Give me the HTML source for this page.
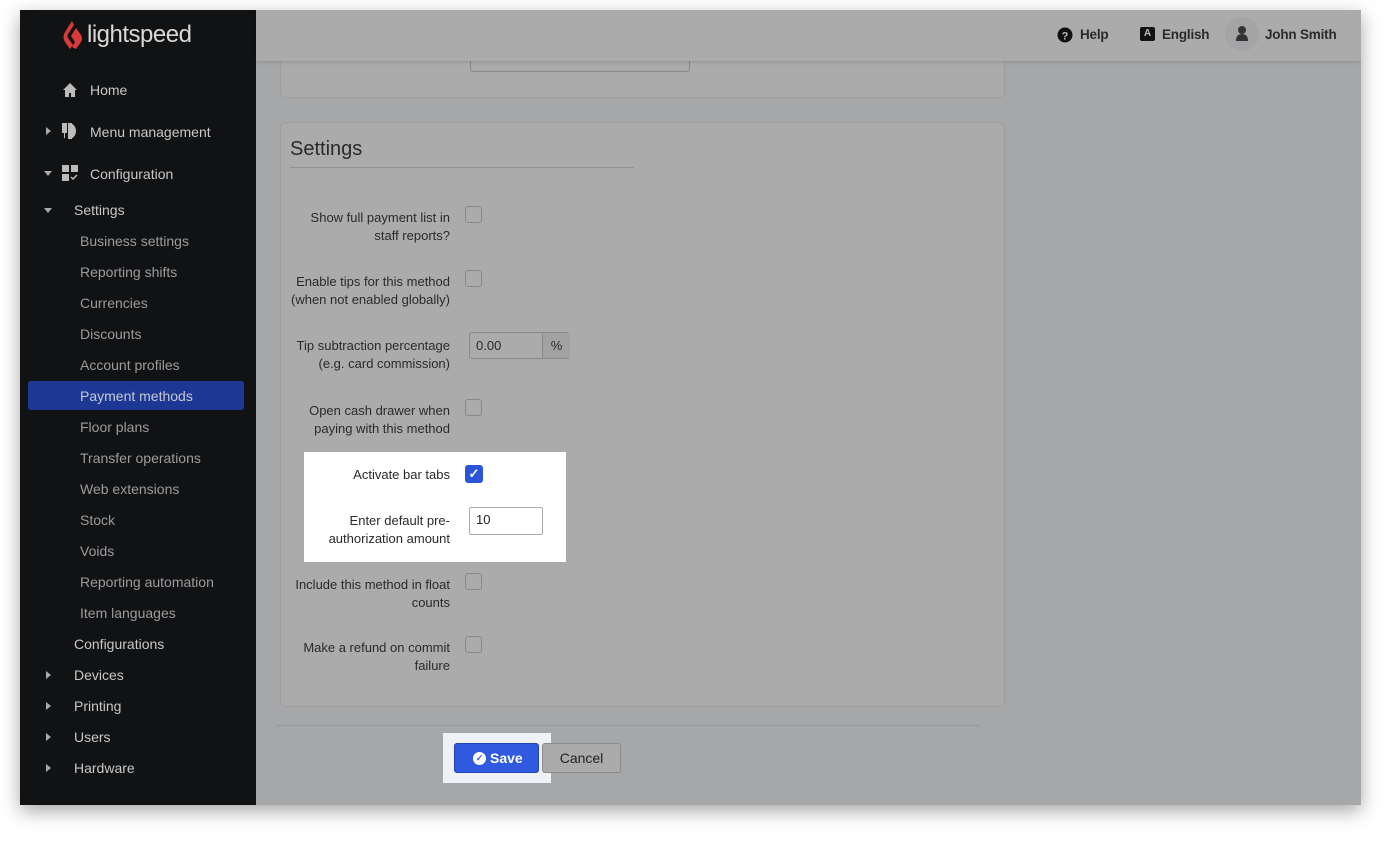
<!DOCTYPE html>
<html><head><style>
*{margin:0;padding:0;box-sizing:border-box}
body{width:1391px;height:846px;background:#fff;font-family:"Liberation Sans",sans-serif;position:relative;overflow:hidden}
#win{position:absolute;left:20px;top:10px;width:1341px;height:795px;background:#a6a7a9;box-shadow:0 6px 18px rgba(0,0,0,.35);overflow:hidden}
#side{position:absolute;left:0;top:0;width:236px;height:795px;background:#111214}
#hdr{position:absolute;left:236px;top:0;right:0;height:51px;background:#ababab;box-shadow:0 1px 4px rgba(0,0,0,.15)}
.s{position:absolute;font-size:14px;color:#c8c8c8;white-space:nowrap}
.sub{position:absolute;left:60px;font-size:14px;color:#9c9c9c}
.tri{position:absolute;width:0;height:0}
.tr{border-top:4px solid transparent;border-bottom:4px solid transparent;border-left:5px solid #aaa}
.td{border-left:4px solid transparent;border-right:4px solid transparent;border-top:5px solid #aaa}
.card{position:absolute;background:#ababab;border:1px solid #9d9d9d;border-radius:6px}
.lbl{position:absolute;right:0;width:180px;text-align:right;font-size:13px;line-height:18px;color:#2a2a2a}
.row{position:absolute;left:260px;width:170px}
.cb{position:absolute;width:17px;height:17px;border:1px solid #888;border-radius:3px;background:#ababab}
.h{position:absolute;font-size:13.5px;color:#2a2a2a;font-weight:bold;letter-spacing:-.2px}
</style></head><body>
<div id="win">
<div id="side">
 <svg style="position:absolute;left:42px;top:10px" width="22" height="30" viewBox="0 0 22 30"><path d="M10 1 L3 12 Q0 17 3 22 L8 29 L11 25 L6 18 Q5 16 6 14 L12 5Z M14 8 L9 16 L13 22 L10 27 L14 29 L19 22 Q21 18 19 15 Z" fill="#d93a3a"/></svg>
 <div class="s" style="left:67px;top:11px;font-size:24px;color:#d8d8d8;letter-spacing:-.5px">lightspeed</div>
 <svg style="position:absolute;left:42px;top:72px" width="16" height="15" viewBox="0 0 16 15"><path d="M8 1 L1 8 H3 V15 H7 V11 H9 V15 H13 V8 H15Z" fill="#bbb"/></svg>
 <div class="s" style="left:70px;top:72px">Home</div>
 <div class="tri tr" style="left:26px;top:117px"></div>
 <svg style="position:absolute;left:42px;top:113px" width="17" height="16"><rect x="0" y="0" width="5" height="10" fill="#bbb"/><rect x="2" y="10" width="1" height="5" fill="#bbb"/><path d="M7 0 A7 8 0 0 1 7 16Z" fill="#bbb"/><rect x="6" y="0" width="4" height="16" fill="#bbb"/></svg>
 <div class="s" style="left:70px;top:114px">Menu management</div>
 <div class="tri td" style="left:24px;top:161px"></div>
 <svg style="position:absolute;left:42px;top:155px" width="16" height="16"><rect x="0" y="0" width="7" height="7" fill="#bbb"/><rect x="9" y="0" width="7" height="7" fill="#bbb"/><rect x="0" y="9" width="7" height="7" fill="#bbb"/><path d="M9 12 L11 14 L15 10" stroke="#bbb" stroke-width="1.5" fill="none"/></svg>
 <div class="s" style="left:70px;top:156px">Configuration</div>
 <div class="tri td" style="left:24px;top:198px"></div>
 <div class="s" style="left:54px;top:192px">Settings</div>
 <div class="sub" style="top:223px">Business settings</div>
 <div class="sub" style="top:254px">Reporting shifts</div>
 <div class="sub" style="top:285px">Currencies</div>
 <div class="sub" style="top:316px">Discounts</div>
 <div class="sub" style="top:347px">Account profiles</div>
 <div style="position:absolute;left:8px;top:371px;width:216px;height:29px;background:#1c3894;border-radius:3px"></div>
 <div class="sub" style="top:378px;color:#c8c8d0">Payment methods</div>
 <div class="sub" style="top:409px">Floor plans</div>
 <div class="sub" style="top:440px">Transfer operations</div>
 <div class="sub" style="top:471px">Web extensions</div>
 <div class="sub" style="top:502px">Stock</div>
 <div class="sub" style="top:533px">Voids</div>
 <div class="sub" style="top:564px">Reporting automation</div>
 <div class="sub" style="top:595px">Item languages</div>
 <div class="s" style="left:54px;top:626px">Configurations</div>
 <div class="tri tr" style="left:26px;top:661px"></div><div class="s" style="left:54px;top:657px">Devices</div>
 <div class="tri tr" style="left:26px;top:692px"></div><div class="s" style="left:54px;top:688px">Printing</div>
 <div class="tri tr" style="left:26px;top:723px"></div><div class="s" style="left:54px;top:719px">Users</div>
 <div class="tri tr" style="left:26px;top:754px"></div><div class="s" style="left:54px;top:750px">Hardware</div>
</div>
<div class="card" style="left:260px;top:-10px;width:725px;height:98px">
 <div style="position:absolute;left:80px;top:48px;width:109px;text-align:right;font-size:13px;color:#2a2a2a">Account ID</div>
 <div style="position:absolute;left:189px;top:48px;width:220px;height:23px;border:1px solid #888;border-radius:3px;background:#ababab"></div>
</div>
<div id="hdr">
 <svg style="position:absolute;left:801px;top:17px" width="16" height="16"><circle cx="8" cy="8" r="7.5" fill="#111"/><text x="8" y="12.5" font-size="11" font-weight="bold" text-anchor="middle" fill="#bbb" font-family="Liberation Sans">?</text></svg>
 <div class="h" style="left:824px;top:17px">Help</div>
 <div style="position:absolute;left:884px;top:17px;width:15px;height:14px;background:#111;border-radius:2px;color:#bbb;font-size:10px;font-weight:bold;text-align:center;line-height:14px">A</div>
 <div class="h" style="left:906px;top:17px">English</div>
 <div style="position:absolute;left:969px;top:7px;width:34px;height:34px;border-radius:50%;background:#a4a4a6"></div>
 <svg style="position:absolute;left:979px;top:15px" width="14" height="17"><circle cx="7" cy="5" r="4" fill="#333"/><path d="M1 16 Q1 9 7 9 Q13 9 13 16Z" fill="#333"/></svg>
 <div class="h" style="left:1009px;top:17px">John Smith</div>
</div>
<div class="card" style="left:260px;top:112px;width:725px;height:585px">
 <div style="position:absolute;left:9px;top:15px;font-size:20px;color:#2a2a2a">Settings</div>
 <div style="position:absolute;left:9px;top:44px;width:344px;border-top:1px solid #939393"></div>
</div>
<div style="position:absolute;left:284px;top:442px;width:262px;height:110px;background:#fff"></div>
<div style="position:absolute;left:423px;top:723px;width:108px;height:50px;background:#eef1f6"></div>
<div id="form" style="position:absolute;left:0;top:0">
 <div class="row" style="top:199px"><div class="lbl">Show full payment list in<br>staff reports?</div></div>
 <div class="cb" style="left:445px;top:196px"></div>
 <div class="row" style="top:263px"><div class="lbl">Enable tips for this method<br>(when not enabled globally)</div></div>
 <div class="cb" style="left:445px;top:260px"></div>
 <div class="row" style="top:327px"><div class="lbl">Tip subtraction percentage<br>(e.g. card commission)</div></div>
 <div style="position:absolute;left:449px;top:322px;width:101px;height:27px;border:1px solid #888;border-radius:3px;background:#ababab"><div style="position:absolute;left:72px;top:0;width:28px;height:25px;border-left:1px solid #888;background:#a2a2a2;font-size:13px;text-align:center;line-height:25px;color:#2a2a2a">%</div><div style="position:absolute;left:6px;top:5px;font-size:13px;color:#2a2a2a">0.00</div></div>
 <div class="row" style="top:392px"><div class="lbl">Open cash drawer when<br>paying with this method</div></div>
 <div class="cb" style="left:445px;top:389px"></div>
 <div class="row" style="top:456px"><div class="lbl">Activate bar tabs</div></div>
 <div style="position:absolute;left:445px;top:455px;width:18px;height:18px;border-radius:3px;background:#2b54d9;color:#fff;font-size:13px;text-align:center;line-height:18px;font-weight:bold">✓</div>
 <div class="row" style="top:502px"><div class="lbl">Enter default pre-<br>authorization amount</div></div>
 <div style="position:absolute;left:449px;top:497px;width:74px;height:28px;border:1px solid #aaa;border-radius:2px;background:#fff;font-size:13px;padding:4px 6px;color:#222">10</div>
 <div class="row" style="top:566px"><div class="lbl">Include this method in float<br>counts</div></div>
 <div class="cb" style="left:445px;top:563px"></div>
 <div class="row" style="top:629px"><div class="lbl">Make a refund on commit<br>failure</div></div>
 <div class="cb" style="left:445px;top:626px"></div>
</div>
<div style="position:absolute;left:256px;top:715px;width:704px;border-top:1px solid #999"></div>
<div style="position:absolute;left:434px;top:733px;width:85px;height:30px;background:#2f5ae0;border:1px solid #2444b0;border-radius:3px;color:#fff;font-size:14px;font-weight:bold;line-height:28px;padding-left:19px"><span style="position:absolute;left:18px;top:8px;width:13px;height:13px;border-radius:50%;background:#fff;color:#2f5ae0;font-size:9px;line-height:13px;text-align:center">✓</span><span style="margin-left:16px">Save</span></div>
<div style="position:absolute;left:522px;top:733px;width:79px;height:30px;border:1px solid #8a8a8a;border-radius:3px;background:#ababab;color:#222;font-size:14px;text-align:center;line-height:28px">Cancel</div>
</div>
</body></html>
